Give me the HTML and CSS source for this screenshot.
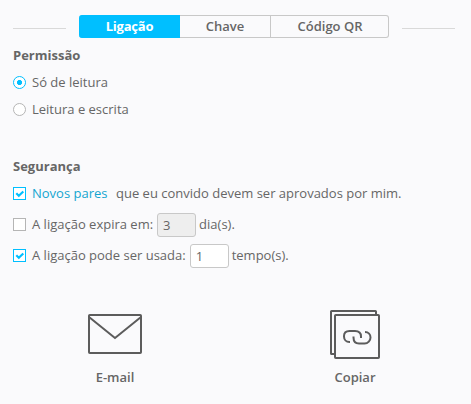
FILE: index.html
```html
<!DOCTYPE html>
<html lang="pt">
<head>
<meta charset="utf-8">
<title>Ligação</title>
<link rel="stylesheet" href="styles.css">
</head>
<body>
<header class="top">
  <span class="rule"></span>
  <nav class="tabs">
    <button class="tab active">Ligação</button>
    <button class="tab key">Chave</button>
    <button class="tab qr">Código QR</button>
  </nav>
  <span class="rule"></span>
</header>
<main>
  <section class="permission">
    <h2>Permissão</h2>
    <div class="row radio-row"><span class="radio on"></span><span class="label">Só de leitura</span></div>
    <div class="row radio-row"><span class="radio"></span><span class="label">Leitura e escrita</span></div>
  </section>
  <section class="security">
    <h2>Segurança</h2>
    <div class="row check-row">
      <span class="check on"><svg width="11" height="11" viewBox="0 0 11 11"><path d="M2.300 5.300 4.800 7.700 9.300 3.500"/></svg></span>
      <a class="label peers">Novos pares</a><span class="label">que eu convido devem ser aprovados por mim.</span>
    </div>
    <div class="row check-row">
      <span class="check"></span>
      <span class="label">A ligação expira em:</span><input class="num" value="3" disabled><span class="label">dia(s).</span>
    </div>
    <div class="row check-row">
      <span class="check on"><svg width="11" height="11" viewBox="0 0 11 11"><path d="M2.300 5.300 4.800 7.700 9.300 3.500"/></svg></span>
      <span class="label">A ligação pode ser usada:</span><input class="num" value="1"><span class="label">tempo(s).</span>
    </div>
  </section>
</main>
<footer class="actions">
  <div class="action mail">
    <svg width="56" height="52" viewBox="0 0 56 52"><rect x="2" y="6" width="52" height="38" rx=".8"/><path d="M2 8 28 29 54 8"/></svg>
    <span>E-mail</span>
  </div>
  <div class="action copy">
    <svg width="54" height="52" viewBox="0 0 54 52"><path d="M7 45H3.600Q3 45 3 44.400V2.600Q3 2 3.600 2H47.400Q48 2 48 2.600V6"/><rect x="7" y="6" width="44" height="43" rx=".8"/><path class="link" d="M22 33H21.500C18 33 16 30.500 16 27.500V27C16 23.500 18.500 22 21.500 22H27C31 22 33 24 33 27.500V29M37 23C40.500 23 42.500 25.500 42.500 28.500S40 34.500 36.500 34.500H31C27.500 34.500 25.500 32 25.500 28.500V27.500"/></svg>
    <span>Copiar</span>
  </div>
</footer>
</body>
</html>
```
FILE: styles.css
```css
* { box-sizing: border-box; }
body {
  margin: 0;
  padding: 15px 13px 0;
  width: 471px;
  height: 404px;
  overflow: hidden;
  background: #fafafc;
  color: #666;
  font: 13px/18px "Open Sans", sans-serif;
}
.top { display: flex; gap: 13px; width: 442px; height: 23px; }
.rule { flex: 1; height: 1px; margin-top: 13px; background: #d9d9d9; }
.tabs { display: flex; width: 310px; }
.tab {
  width: 119px;
  height: 23px;
  padding: 0 0 1px;
  border: 1px solid #c8c8c8;
  border-left: 0;
  background: #fafafc;
  color: #666;
  font: 600 13px/20px "Open Sans", sans-serif;
}
.tab.active {
  width: 101px;
  padding-left: 1px;
  border-color: #00bfff;
  border-radius: 3px 0 0 3px;
  background: #00bfff;
  color: #fff;
  font-weight: 700;
  letter-spacing: -0.2px;
}
.tab.key { width: 91px; }
.tab.qr { width: 118px; padding-left: 1px; border-radius: 0 3px 3px 0; }
h2 { margin: 0; font-size: 13px; line-height: 18px; font-weight: 700; color: #666; }
.permission { padding-top: 8px; height: 120px; }
.permission h2 { margin-bottom: 5px; }
.row { display: flex; align-items: center; white-space: nowrap; }
.radio-row { height: 27px; }
.radio, .check { flex: none; width: 13px; height: 13px; margin-right: 6px; border: 1px solid #b5b5b5; background: #fff; }
.radio { border-radius: 50%; }
.radio.on { border-color: #00bfff; background: radial-gradient(circle, #00bfff 0 2.200px, #fff 2.900px); }
.check.on { border-color: #00bfff; }
.check svg { display: block; fill: none; stroke: #00bfff; stroke-width: 2.200; }
.label { padding-bottom: 2px; }
.security { margin-top: -1px; }
.security h2 { margin-bottom: 3px; }
.check-row { height: 31px; }
.peers { margin-right: 8.500px; color: #14a5d0; }
.num {
  width: 39px;
  height: 24px;
  margin: 0 3px 0 4px;
  padding: 1px 5px 0;
  border: 1px solid #c8c8c8;
  border-radius: 3px;
  background: #fff;
  color: #666;
  font: 13px/20px "Open Sans", sans-serif;
}
.num:disabled { background: #eee; }
.actions { display: flex; justify-content: space-between; padding: 38px 75px 0 74px; font-weight: 600; }
.action { display: flex; flex-direction: column; align-items: center; width: 56px; }
.action svg { display: block; margin-bottom: 7px; fill: none; stroke: #5c5c5c; stroke-width: 2; }
```
